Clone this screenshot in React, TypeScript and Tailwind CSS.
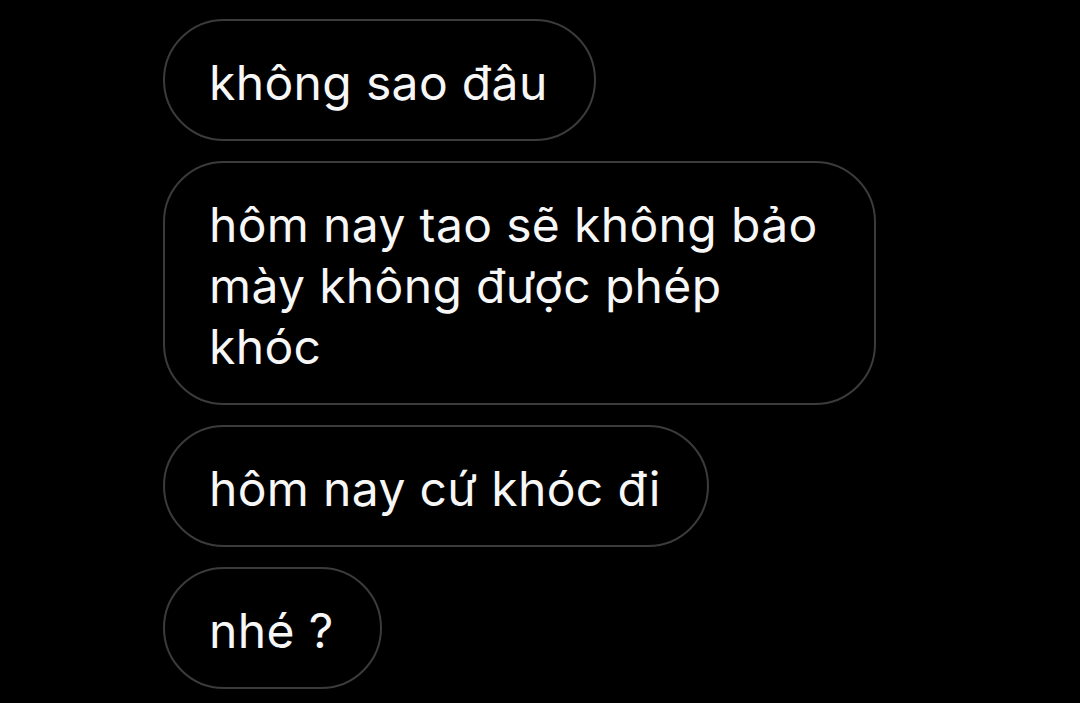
export default function App() {
  const bubble =
    "border-2 border-[#3b3b3b] rounded-[61px] pl-[44px] pr-[46px] pt-[31px] pb-[26px] text-[48px] leading-[61px] text-[#f7f7f7] tracking-[0.35px]";
  return (
    <div
      className="w-[1080px] h-[703px] bg-black overflow-hidden flex flex-col items-start gap-5 pt-[19px] pl-[163px]"
      style={{ fontFamily: "Inter, 'Noto Sans', sans-serif" }}
    >
      <div className={bubble}>không sao đâu</div>
      <div className={bubble + " w-[713px]"}>
        hôm nay tao sẽ không bảo
        <br />
        mày không được phép
        <br />
        khóc
      </div>
      <div className={bubble}>hôm nay cứ khóc đi</div>
      <div className={bubble}>nhé ?</div>
    </div>
  );
}
